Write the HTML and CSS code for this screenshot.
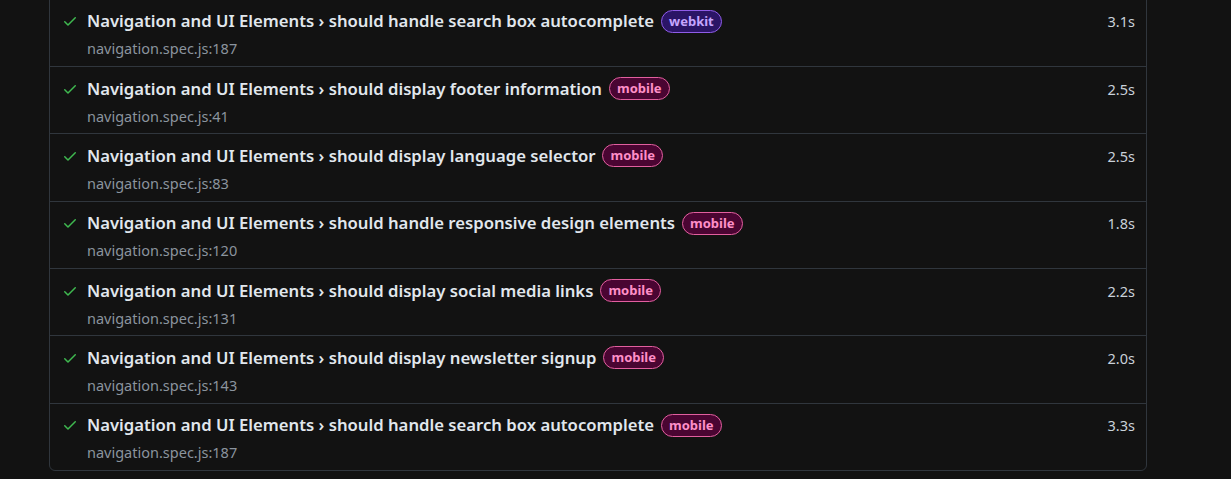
FILE: index.html
```html
<!DOCTYPE html>
<html>
<head>
<meta charset="utf-8">
<link rel="stylesheet" href="styles.css">
</head>
<body>
<div class="list">
  <div class="row">
    <svg class="check" viewBox="0 0 16 16"><path d="M13.78 4.22a.75.75 0 010 1.06l-7.25 7.25a.75.75 0 01-1.06 0L2.22 9.28a.75.75 0 011.06-1.06L6 10.94l6.72-6.72a.75.75 0 011.06 0z"/></svg>
    <div class="body">
      <div class="title"><span>Navigation and UI Elements › should handle search box autocomplete</span><span class="badge webkit">webkit</span></div>
      <div class="file">navigation.spec.js:187</div>
    </div>
    <div class="dur">3.1s</div>
  </div>
  <div class="row">
    <svg class="check" viewBox="0 0 16 16"><path d="M13.78 4.22a.75.75 0 010 1.06l-7.25 7.25a.75.75 0 01-1.06 0L2.22 9.28a.75.75 0 011.06-1.06L6 10.94l6.72-6.72a.75.75 0 011.06 0z"/></svg>
    <div class="body">
      <div class="title"><span>Navigation and UI Elements › should display footer information</span><span class="badge mobile">mobile</span></div>
      <div class="file">navigation.spec.js:41</div>
    </div>
    <div class="dur">2.5s</div>
  </div>
  <div class="row">
    <svg class="check" viewBox="0 0 16 16"><path d="M13.78 4.22a.75.75 0 010 1.06l-7.25 7.25a.75.75 0 01-1.06 0L2.22 9.28a.75.75 0 011.06-1.06L6 10.94l6.72-6.72a.75.75 0 011.06 0z"/></svg>
    <div class="body">
      <div class="title"><span>Navigation and UI Elements › should display language selector</span><span class="badge mobile">mobile</span></div>
      <div class="file">navigation.spec.js:83</div>
    </div>
    <div class="dur">2.5s</div>
  </div>
  <div class="row">
    <svg class="check" viewBox="0 0 16 16"><path d="M13.78 4.22a.75.75 0 010 1.06l-7.25 7.25a.75.75 0 01-1.06 0L2.22 9.28a.75.75 0 011.06-1.06L6 10.94l6.72-6.72a.75.75 0 011.06 0z"/></svg>
    <div class="body">
      <div class="title"><span>Navigation and UI Elements › should handle responsive design elements</span><span class="badge mobile">mobile</span></div>
      <div class="file">navigation.spec.js:120</div>
    </div>
    <div class="dur">1.8s</div>
  </div>
  <div class="row">
    <svg class="check" viewBox="0 0 16 16"><path d="M13.78 4.22a.75.75 0 010 1.06l-7.25 7.25a.75.75 0 01-1.06 0L2.22 9.28a.75.75 0 011.06-1.06L6 10.94l6.72-6.72a.75.75 0 011.06 0z"/></svg>
    <div class="body">
      <div class="title"><span>Navigation and UI Elements › should display social media links</span><span class="badge mobile">mobile</span></div>
      <div class="file">navigation.spec.js:131</div>
    </div>
    <div class="dur">2.2s</div>
  </div>
  <div class="row">
    <svg class="check" viewBox="0 0 16 16"><path d="M13.78 4.22a.75.75 0 010 1.06l-7.25 7.25a.75.75 0 01-1.06 0L2.22 9.28a.75.75 0 011.06-1.06L6 10.94l6.72-6.72a.75.75 0 011.06 0z"/></svg>
    <div class="body">
      <div class="title"><span>Navigation and UI Elements › should display newsletter signup</span><span class="badge mobile">mobile</span></div>
      <div class="file">navigation.spec.js:143</div>
    </div>
    <div class="dur">2.0s</div>
  </div>
  <div class="row">
    <svg class="check" viewBox="0 0 16 16"><path d="M13.78 4.22a.75.75 0 010 1.06l-7.25 7.25a.75.75 0 01-1.06 0L2.22 9.28a.75.75 0 011.06-1.06L6 10.94l6.72-6.72a.75.75 0 011.06 0z"/></svg>
    <div class="body">
      <div class="title"><span>Navigation and UI Elements › should handle search box autocomplete</span><span class="badge mobile">mobile</span></div>
      <div class="file">navigation.spec.js:187</div>
    </div>
    <div class="dur">3.3s</div>
  </div>
</div>
</body>
</html>
```
FILE: styles.css
```css
html, body {
  margin: 0;
  background: #121212;
}
body {
  font-family: "Noto Sans", "Open Sans", sans-serif;
  color: #e6edf3;
  overflow: hidden;
}
.list {
  margin: -1.2px 0 0 49px;
  width: 1096px;
  border: 1px solid #30363d;
  border-radius: 0 0 6px 6px;
}
.row {
  display: flex;
  align-items: flex-start;
  padding: 9.5px 11px 5.83px 12px;
  border-bottom: 1px solid #30363d;
}
.row:last-child {
  border-bottom: none;
}
.check {
  width: 16px;
  height: 16px;
  fill: #3fb950;
  margin: 4px 9px 0 0;
  flex: none;
}
.body {
  flex: 1;
  min-width: 0;
}
.title {
  display: flex;
  align-items: center;
  font-size: 16.7px;
  font-weight: 600;
  line-height: 24px;
  color: #e1e7ed;
}
.badge {
  margin-left: 7px;
  height: 21px;
  line-height: 20px;
  padding: 0 7px;
  border-radius: 12px;
  font-size: 13px;
  font-weight: 700;
  border: 1px solid;
}
.webkit {
  background: #2b1566;
  border-color: #8f5ce8;
  color: #c6a6ff;
}
.mobile {
  background: #4a0532;
  border-color: #e25f9f;
  color: #ff8fc8;
}
.file {
  margin-top: 3px;
  font-size: 14.5px;
  line-height: 24px;
  color: #8b949e;
}
.dur {
  font-size: 14.5px;
  line-height: 24px;
  color: #c9d1d9;
  flex: none;
}
```
